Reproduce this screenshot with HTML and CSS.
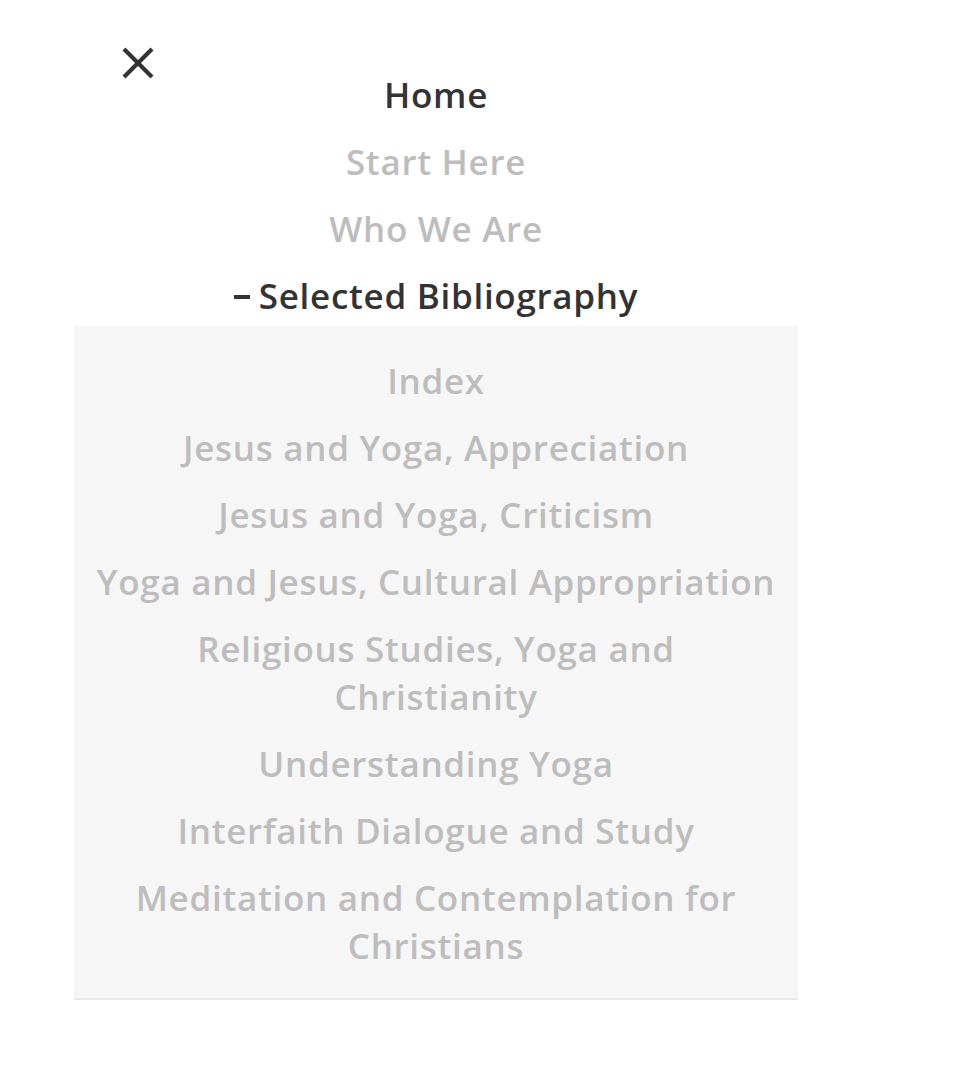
FILE: index.html
```html
<!DOCTYPE html>
<html lang="en">
<head>
<meta charset="utf-8">
<title>Menu</title>
<link rel="stylesheet" href="styles.css">
</head>
<body>
<div class="menu">
  <div class="menu-head">
    <button class="close" aria-label="Close menu">
      <svg width="32" height="32" viewBox="0 0 32 32"><path d="M2 2 L30 30 M30 2 L2 30" stroke="#333" stroke-width="4.2" fill="none"/></svg>
    </button>
  </div>
  <nav class="nav">
    <a class="item active" href="#">Home</a>
    <a class="item" href="#">Start Here</a>
    <a class="item" href="#">Who We Are</a>
    <a class="item active parent" href="#"><span class="minus"></span>Selected Bibliography</a>
    <div class="sub">
      <a class="item" href="#">Index</a>
      <a class="item" href="#">Jesus and Yoga, Appreciation</a>
      <a class="item" href="#">Jesus and Yoga, Criticism</a>
      <a class="item" href="#">Yoga and Jesus, Cultural Appropriation</a>
      <a class="item" href="#">Religious Studies, Yoga and Christianity</a>
      <a class="item" href="#">Understanding Yoga</a>
      <a class="item" href="#">Interfaith Dialogue and Study</a>
      <a class="item" href="#">Meditation and Contemplation for Christians</a>
    </div>
  </nav>
</div>
</body>
</html>
```
FILE: styles.css
```css
html, body {
  margin: 0;
  padding: 0;
  background: #fff;
}
body {
  font-family: "Open Sans", "Noto Sans", sans-serif;
}
.menu {
  width: 724px;
  margin-left: 74px;
  padding-top: 47px;
}
.menu-head {
  height: 0;
  padding-left: 48px;
}
.close {
  display: block;
  width: 32px;
  height: 32px;
  padding: 0;
  border: 0;
  background: none;
  cursor: pointer;
}
.close svg {
  display: block;
}
.nav {
  display: flex;
  flex-direction: column;
  padding-top: 14px;
}
.item {
  display: block;
  text-align: center;
  font-size: 35px;
  font-weight: 600;
  letter-spacing: 0.7px;
  line-height: 48px;
  padding: 9.5px 96px;
  color: #bdbdbd;
  text-decoration: none;
}
.item.active {
  color: #333;
}
.parent {
  padding: 9.5px 0 0;
  height: 64px;
  box-sizing: border-box;
}
.minus {
  display: inline-block;
  width: 16px;
  height: 4px;
  background: #333;
  vertical-align: middle;
  margin-right: 9px;
  position: relative;
  top: -2px;
}
.sub {
  background: #f6f6f6;
  border-bottom: 2px solid #e8e8e8;
  padding: 21.5px 0 18px;
  display: flex;
  flex-direction: column;
}
.sub .item {
  padding-left: 20px;
  padding-right: 20px;
}
```
